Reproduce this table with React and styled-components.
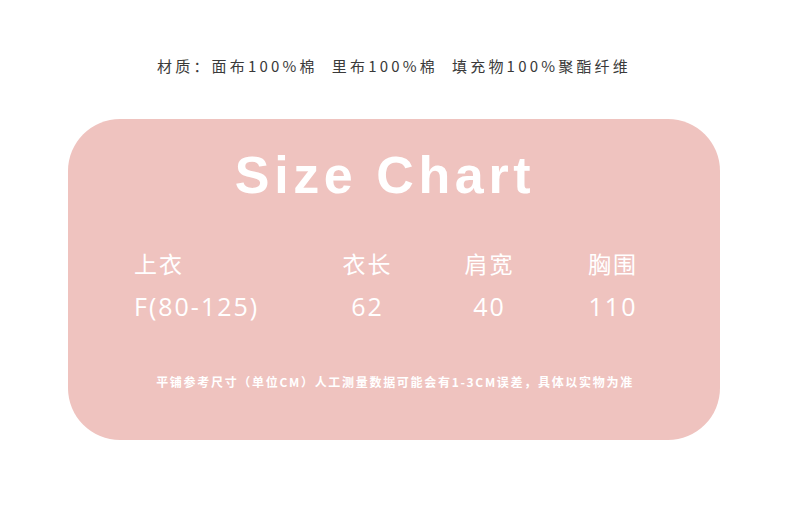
import styled, { createGlobalStyle } from 'styled-components';

const GlobalStyle = createGlobalStyle`
  html, body {
    margin: 0;
    padding: 0;
    background: #ffffff;
  }
  body {
    font-family: 'Noto Sans CJK SC', 'Noto Sans', sans-serif;
  }
`;

const Page = styled.div`
  width: 790px;
  height: 509px;
  display: flex;
  flex-direction: column;
  align-items: center;
  padding-top: 54px;
  box-sizing: border-box;
`;

const Material = styled.p`
  margin: 0;
  font-size: 15px;
  line-height: 24px;
  letter-spacing: 3.2px;
  color: #3a3a3a;
  padding-right: 2px;

  span + span {
    margin-left: 14px;
  }
`;

const Card = styled.div`
  margin-top: 41px;
  width: 652px;
  height: 321px;
  margin-right: 2px;
  background: #efc3bf;
  border-radius: 52px;
  box-sizing: border-box;
  padding: 25px 0 0 0;
  display: flex;
  flex-direction: column;
  color: #ffffff;
`;

const Title = styled.h1`
  margin: 0;
  text-align: center;
  font-family: 'Liberation Sans', Arial, sans-serif;
  font-weight: 700;
  font-size: 52px;
  line-height: 62px;
  letter-spacing: 4.6px;
  padding-right: 18px;
`;

const Table = styled.div`
  margin-top: 41px;
  display: grid;
  grid-template-columns: 173px 121px 123px 124px;
  padding-left: 66px;
  row-gap: 10px;
`;

const Cell = styled.div`
  font-size: ${(p) => (p.$head ? '23px' : '25px')};
  line-height: ${(p) => (p.$head ? '32px' : '34px')};
  letter-spacing: 2px;
  text-align: ${(p) => (p.$first ? 'left' : 'center')};
  white-space: nowrap;
  font-family: ${(p) =>
    p.$head ? "'Noto Sans CJK SC', sans-serif" : "'Open Sans', 'Noto Sans', sans-serif"};
  font-weight: 400;
`;

const Note = styled.p`
  margin: 51px 0 0 0;
  text-align: center;
  font-size: 12px;
  line-height: 16px;
  font-weight: 700;
  letter-spacing: 1.7px;
  padding-left: 2px;
`;

const rows = [
  ['上衣', '衣长', '肩宽', '胸围'],
  ['F(80-125)', '62', '40', '110'],
];

export default function App() {
  return (
    <>
      <GlobalStyle />
      <Page>
        <Material>
          <span>材质：面布100%棉</span>
          <span>里布100%棉</span>
          <span>填充物100%聚酯纤维</span>
        </Material>
        <Card>
          <Title>Size Chart</Title>
          <Table>
            {rows.map((row, r) =>
              row.map((text, c) => (
                <Cell key={`${r}-${c}`} $head={r === 0} $first={c === 0}>
                  {text}
                </Cell>
              ))
            )}
          </Table>
          <Note>平铺参考尺寸（单位CM）人工测量数据可能会有1-3CM误差，具体以实物为准</Note>
        </Card>
      </Page>
    </>
  );
}
